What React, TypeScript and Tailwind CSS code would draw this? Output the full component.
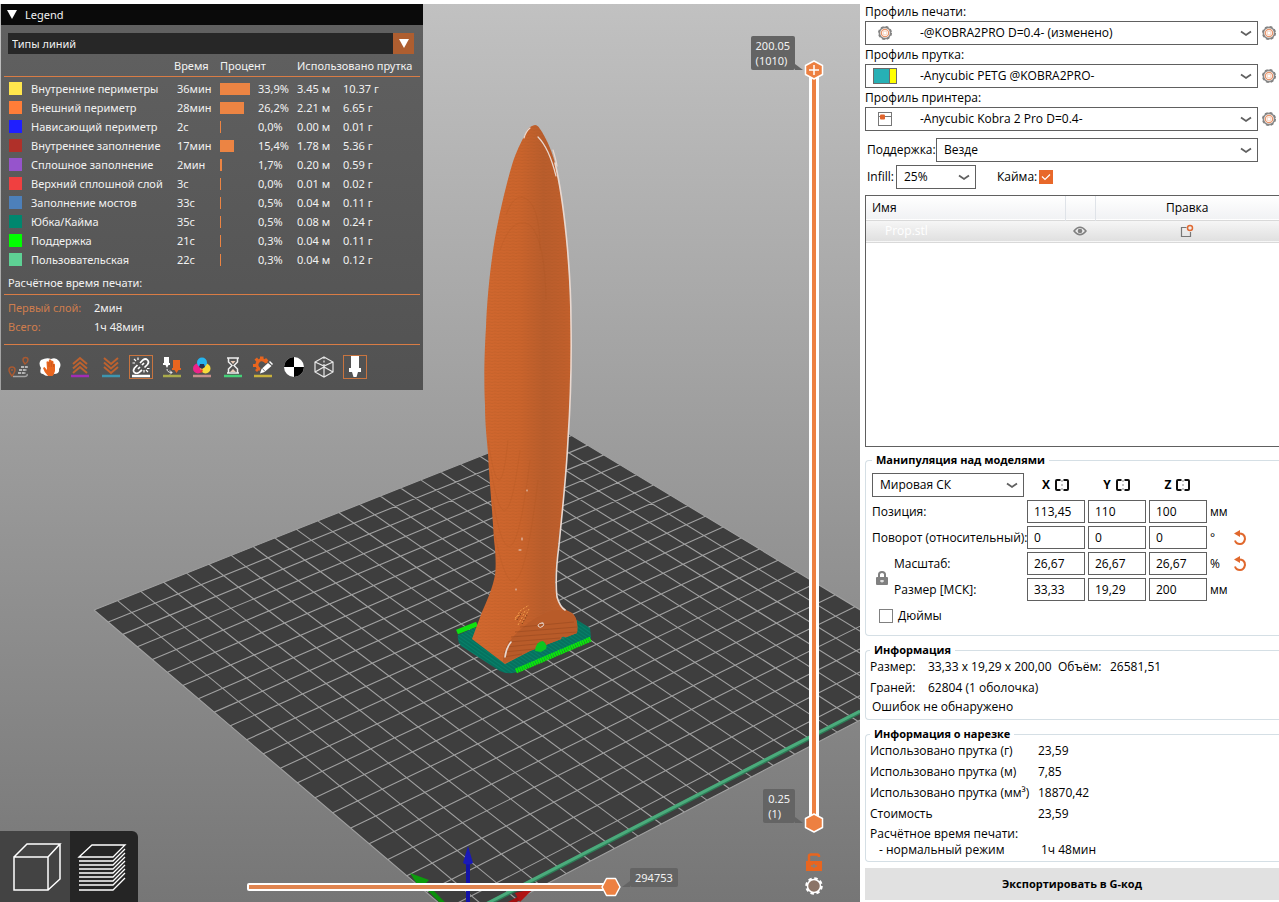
import React, { useState } from 'react';

type Point = [number, number];

interface LineType {
  name: string;
  color: string;
  time: string;
  bar: number;
  percent: string;
  meters: string;
  grams: string;
}

const lineTypes: LineType[] = [
  { name: 'Внутренние периметры', color: '#ffe64d', time: '36мин', bar: 30, percent: '33,9%', meters: '3.45 м', grams: '10.37 г' },
  { name: 'Внешний периметр', color: '#ff7d38', time: '28мин', bar: 24, percent: '26,2%', meters: '2.21 м', grams: '6.65 г' },
  { name: 'Нависающий периметр', color: '#1f1fff', time: '2с', bar: 1, percent: '0,0%', meters: '0.00 м', grams: '0.01 г' },
  { name: 'Внутреннее заполнение', color: '#b03029', time: '17мин', bar: 14, percent: '15,4%', meters: '1.78 м', grams: '5.36 г' },
  { name: 'Сплошное заполнение', color: '#9654cc', time: '2мин', bar: 2, percent: '1,7%', meters: '0.20 м', grams: '0.59 г' },
  { name: 'Верхний сплошной слой', color: '#f04040', time: '3с', bar: 1, percent: '0,0%', meters: '0.01 м', grams: '0.02 г' },
  { name: 'Заполнение мостов', color: '#4d80ba', time: '33с', bar: 1, percent: '0,5%', meters: '0.04 м', grams: '0.11 г' },
  { name: 'Юбка/Кайма', color: '#00876e', time: '35с', bar: 1, percent: '0,5%', meters: '0.08 м', grams: '0.24 г' },
  { name: 'Поддержка', color: '#00ff00', time: '21с', bar: 1, percent: '0,3%', meters: '0.04 м', grams: '0.11 г' },
  { name: 'Пользовательская', color: '#5ed194', time: '22с', bar: 1, percent: '0,3%', meters: '0.04 м', grams: '0.12 г' },
];

// Bed corners: front, right, back, left
const bed: Point[] = [[466, 926], [958, 669], [556, 426], [94, 610]];
const CELLS = 22;

// Projects a bed position (0..1, 0..1) to the scene
const project = (u: number, v: number): Point => {
  const [[x0, y0], [x1, y1], [x2, y2], [x3, y3]] = bed;
  const dx1 = x1 - x2, dx2 = x3 - x2, dx3 = x0 - x1 + x2 - x3;
  const dy1 = y1 - y2, dy2 = y3 - y2, dy3 = y0 - y1 + y2 - y3;
  const den = dx1 * dy2 - dx2 * dy1;
  const g = (dx3 * dy2 - dx2 * dy3) / den;
  const h = (dx1 * dy3 - dx3 * dy1) / den;
  const w = g * u + h * v + 1;
  return [
    ((x1 - x0 + g * x1) * u + (x3 - x0 + h * x3) * v + x0) / w,
    ((y1 - y0 + g * y1) * u + (y3 - y0 + h * y3) * v + y0) / w,
  ];
};

const segment = (a: Point, b: Point) => `M${a.join(' ')}L${b.join(' ')}`;

const gridPath = Array.from({ length: CELLS + 1 }, (_, i) => {
  const t = i / CELLS;
  return segment(project(t, 0), project(t, 1)) + segment(project(0, t), project(1, t));
}).join('');

const bladePath =
  'M535 125C530 126 526 130 525 135C521 142 516 152 512 165C506 185 499 215 495 238C490 268 487 300 486 327C484 360 484 385 485 405C485 425 487 440 488 453C489 475 493 520 494 540C496 555 496 568 495 575C493 587 487 601 482 612L472 639L505 664L530 651L577 633C578 625 577 617 572 613C566 610 560 607 557 598C555 590 555 578 556 570C558 545 560 530 562 513C564 495 567 455 568 440C571 400 572 350 571 323C570 290 569 270 566 235C564 210 560 188 555 163C551 148 545 136 540 129C538 126 537 125 535 125Z';

const Scene = () => (
  <svg className="absolute inset-0 w-full h-full" viewBox="0 4 860 898" preserveAspectRatio="xMidYMid slice" aria-hidden="true">
    <defs>
      <linearGradient id="sky" x1="0" y1="0" x2="0" y2="1">
        <stop offset="0" stopColor="#c1c1c1" />
        <stop offset="1" stopColor="#767676" />
      </linearGradient>
      <linearGradient id="plastic" x1="0" y1="0" x2="1" y2="0">
        <stop offset="0" stopColor="#d2682f" />
        <stop offset="0.45" stopColor="#cb642c" />
        <stop offset="0.68" stopColor="#b95d2c" />
        <stop offset="0.88" stopColor="#c05f2c" />
        <stop offset="1" stopColor="#c8622c" />
      </linearGradient>
      <pattern id="layers" width="6" height="3" patternUnits="userSpaceOnUse">
        <path d="M0 1.5L3 .8L6 1.5" fill="none" stroke="#9e4c1e" strokeOpacity=".18" />
      </pattern>
      <pattern id="brim" width="3" height="3" patternUnits="userSpaceOnUse" patternTransform="rotate(35)">
        <rect width="3" height="3" fill="#078069" />
        <path d="M0 1H3" stroke="#056353" strokeWidth="1" />
      </pattern>
      <clipPath id="bladeClip"><path d={bladePath} /></clipPath>
    </defs>
    <rect y="4" width="860" height="898" fill="url(#sky)" />

    {/* Print bed */}
    <polygon points={bed.map((p) => p.join(',')).join(' ')} fill="#3e3e3e" />
    <path d={gridPath} fill="none" stroke="#a0a0a0" strokeWidth="1.1" />
    <path d="M480 908L860 712" stroke="#2d7d57" strokeWidth="4" />
    <path d="M480 907L860 711" stroke="#4bab7c" strokeWidth="3" />

    {/* Axes */}
    <path d="M466 926L426 886" stroke="#0a8f0a" strokeWidth="4" />
    <path d="M410 873L429 880L420 889Z" fill="#0c9c0c" />
    <path d="M466 926L520 898" stroke="#a01010" strokeWidth="4" />
    <path d="M533 889L515 893L520 902Z" fill="#b01515" />
    <path d="M468 862V902" stroke="#1313a6" strokeWidth="4" />
    <path d="M468 846L473 863Q468 866 463 863Z" fill="#1a1ab8" />

    {/* Brim and supports */}
    <path d="M457 632L477 624" stroke="#0fe00f" strokeWidth="5" />
    <path d="M458 635L474 628L577 620L590 628L591 638L517 672Q508 675 500 671L461 646Q457 641 458 635Z" fill="url(#brim)" />
    <path d="M516 671L591 639" stroke="#0be60b" strokeWidth="5" strokeDasharray="2 .4" />

    {/* Model */}
    <path d={bladePath} fill="url(#plastic)" />
    <path d={bladePath} fill="url(#layers)" />
    <g clipPath="url(#bladeClip)">
      <g fill="none" stroke="#a9531f" strokeOpacity=".18">
        <path d="M488 440Q500 520 508 440M491 470Q506 560 520 450M493 500Q512 610 530 460M495 535Q518 650 538 480" />
        <path d="M506 215Q515 190 528 200Q540 210 540 250M500 250Q512 215 530 225Q545 240 546 300" />
      </g>
      <path d="M503 664Q502 650 512 638Q528 620 548 612Q568 606 578 620V634L530 651Z" fill="#b85b29" />
      <path d="M520 627L574 622M515 632L577 627M511 637L577 632M508 642L560 638M506 647L546 643M504 652L535 649M504 657L522 654" stroke="#9a4a20" strokeOpacity=".6" />
      <path d="M515 620l5-9m-2 14l7-13m-3 11l7-14m-9 2l9-6m-14 13l12-8" stroke="#f09a4a" strokeWidth="1" strokeDasharray="2 1.5" />
      <path d="M517 620l5-8m0 12l5-9" stroke="#7d3c18" strokeDasharray="1.5 1.5" />
    </g>
    <path d="M535 651Q536 641 543 641Q548 645 546 649L541 652Z" fill="#0cc520" />
    <path d="M561 639Q562 635 566 638Z" fill="#078069" />
    <g fill="none" stroke="#e8d8d0" strokeLinecap="round">
      <path d="M555 163C564 200 571 270 571 323C572 380 570 410 568 440C566 480 562 513 559 545C557 560 555 580 557 597Q560 607 565 610" strokeWidth="1.6" />
      <path d="M538 137Q549 148 556 176M553 150Q556 160 557 166M530 128Q526 131 524 138" strokeWidth="1.2" />
      <path d="M505 657Q506 648 511 642" strokeWidth="1.6" />
      <path d="M543 623q-5 0-5 3q2 3 5 0q2-3-1-3" />
      <path d="M522 538v2M519 550h2M527 490v1M516 589v1" strokeWidth="1" />
    </g>
  </svg>
);

const toolClass = 'w-[22px] h-[22px] flex items-center justify-center';

interface ToolProps {
  label: string;
  active?: boolean;
  underline?: string;
  children: React.ReactNode;
}

const Tool = ({ label, active, underline, children }: ToolProps) => (
  <button type="button" aria-label={label} className={`${toolClass} ${active ? 'outline outline-[#c8743f]' : ''}`}>
    <svg width="22" height="22" viewBox="0 0 22 22" fill="none">
      {children}
      {underline && <path d="M2 20H20" stroke={underline} strokeWidth="2.5" />}
    </svg>
  </button>
);

const Tools = () => (
  <div className="flex justify-between w-[358px] mt-[11px]">
    <Tool label="Перемещения">
      <path d="M4 20C1 16 1 15 1 14a3 3 0 0 1 6 0c0 1 0 2-3 6ZM17 8c-2-2.500-2-3-2-4a2.500 2.500 0 0 1 5 0c0 1 0 2-3 4Z" stroke="#a85a32" strokeWidth="1.500" />
      <circle cx="4" cy="14" r="1" fill="#a85a32" />
      <path d="M5 20.500H17Q20 20 19 18" stroke="#a5a5a5" strokeWidth="1.500" />
      <path d="M13 11H20M11 14H19M10 17H18" stroke="#b5b5b5" strokeWidth="2" strokeDasharray="3 .8" />
    </Tool>
    <Tool label="Очистка">
      <path d="M2 4Q8 1 12 3Q17 1 20 5Q23 9 20 13Q21 18 15 18Q8 22 4 18Q0 18 2 12Q-1 7 2 4Z" fill="#fff" />
      <path d="M9 20Q5 16 4 12L5.500 11L8 14L7.500 6Q8 4.500 9.500 6L10 4Q11 2.500 12 4L13 5Q14 4 14.500 6V8Q16 7 16 9V15Q15 19 13.500 20Z" fill="#e8651f" />
      <path d="M10 6V11M12.300 6V11M14.500 8V11" stroke="#b9501a" strokeWidth=".6" />
    </Tool>
    <Tool label="Ретракты" underline="#a22db5">
      <path d="M4 8L11 2L18 8M4 12.500L11 6.500L18 12.500M4 17L11 11L18 17" stroke="#bd622f" strokeWidth="2" />
    </Tool>
    <Tool label="Деретракты" underline="#3e95ae">
      <path d="M4 2L11 8L18 2M4 6.500L11 12.500L18 6.500M4 11L11 17L18 11" stroke="#bd622f" strokeWidth="2" />
    </Tool>
    <Tool label="Швы" active underline="#fff">
      <path d="M10 7l3-3q2.500-2 4.500 0t0 4.500l-3 3M12 14l-3 2.500q-2.500 1.500-4.500 0t0-4.500l3-3M8 13l2-2M12 9l2-2" stroke="#fff" strokeWidth="1.700" />
      <path d="M4 3l2 2M8 1.500v2.500M2.500 7h2.500M16 14l2 2M14 14v2.500M17 12.500h2.500" stroke="#fff" strokeWidth="1.200" />
    </Tool>
    <Tool label="Смена инструмента" underline="#a9ab4b">
      <path d="M3 1H8V7H9V9H7.500L6 12L4.500 9H2V7H3Z" fill="#fff" />
      <path d="M12 4H19V12H20V14H17.500L15.500 17L13.500 14H11V12H12Z" fill="#e8651f" />
      <path d="M6 13Q6 16.500 11 16.500M9 14.500l2 2l-2 2" stroke="#eee" />
    </Tool>
    <Tool label="Смена цвета" underline="#c68f8b">
      <circle cx="7" cy="12.500" r="5" fill="#ed2289" />
      <circle cx="14.500" cy="12.500" r="5" fill="#f6dc3c" />
      <circle cx="11" cy="6.500" r="5" fill="#25b5ef" />
      <path d="M9 8L13 8L14 11L11 13L8 11Z" fill="#243252" />
      <path d="M11 13Q8 15 10 17Q13 15 11 13Z" fill="#e8402a" />
    </Tool>
    <Tool label="Паузы печати" underline="#45d078">
      <path d="M5 2H17M5 17H17M6.500 2V6L10 9.500L6.500 13V17M15.500 2V6L12 9.500L15.500 13V17" stroke="#eee" strokeWidth="1.500" />
      <path d="M8.500 5H13.500L11 8ZM8 16L11 13L14 16Z" fill="#e8c9b5" />
    </Tool>
    <Tool label="Пользовательский G-код" underline="#c9b23c">
      <path d="M8 13.500A5 5 0 1 1 14.500 7" stroke="#e8651f" strokeWidth="3" />
      <path d="M8 .5H11.500V3H8ZM2.500 3.500L5 1.500L7 4L4.500 6ZM14 2L16.500 4.500L14.500 6.500L12 4ZM1 8H4V11H1ZM3 14L5.500 12L7 14L5 16Z" fill="#e8651f" />
      <path d="M8 17.500L9.500 13L16 7L19.500 10L12.500 16Z" fill="#fff" />
      <path d="M17 6L18 5L21 8L20 9Z" fill="#fff" />
      <path d="M10.500 12.500L13 15.500" stroke="#555" strokeWidth=".8" />
    </Tool>
    <Tool label="Центр масс">
      <circle cx="11" cy="11" r="10" fill="#fff" />
      <path d="M11 11V1A10 10 0 0 0 1 11ZM11 11H21A10 10 0 0 1 11 21Z" fill="#000" />
    </Tool>
    <Tool label="Оболочки">
      <path d="M11 1L20 6V16L11 21L2 16V6ZM2 6L11 10L20 6M11 10V21M2 16L11 11L20 16" stroke="#e8e8e8" strokeWidth="1.200" />
      <path d="M11 1V10" stroke="#e8e8e8" strokeWidth="1.200" strokeDasharray="2 1.500" />
    </Tool>
    <Tool label="Маркер инструмента" active>
      <path d="M7 0H15V12H17V16H14L12.500 21H9.500L8 16H5V12H7Z" fill="#fff" />
    </Tool>
  </div>
);

const LegendPanel = () => {
  const [open, setOpen] = useState(true);

  return (
    <section className="absolute top-0 left-[1px] w-[422px] bg-linear-to-b from-[#616161] to-[#525252] text-[#f2f2f2] text-[11px] leading-[19px] font-['Noto_Sans',sans-serif]">
      <button type="button" onClick={() => setOpen(!open)} className="w-full h-[21px] bg-[#0a0a0a] flex items-center gap-2 px-1.5">
        <svg width="10" height="9" viewBox="0 0 10 9"><path d="M0 0H10L5 9Z" fill="#fff" /></svg>
        Legend
      </button>
      {open && (
        <div className="px-[3px] pt-2 pb-3">
          <div className="relative mx-1 mr-[6px]">
            <select aria-label="Тип отображения" className="block appearance-none w-full h-[21px] bg-[#272727] pl-1 outline-none">
              <option>Типы линий</option>
            </select>
            <span className="absolute right-0 top-0 w-[21px] h-[21px] bg-[#ae5e30] flex items-center justify-center pointer-events-none">
              <svg width="10" height="9" viewBox="0 0 10 9"><path d="M0 0H10L5 9Z" fill="#fff" /></svg>
            </span>
          </div>

          <table className="w-full table-fixed border-separate border-spacing-0 text-left mt-px">
            <colgroup>
              <col className="w-[27px]" />
              <col className="w-[143px]" />
              <col className="w-[46px]" />
              <col className="w-[38px]" />
              <col className="w-[39px]" />
              <col className="w-[46px]" />
              <col />
            </colgroup>
            <thead>
              <tr className="h-[22px]">
                <th colSpan={2} aria-label="Тип" className="p-0 border-b border-[#d97c45]" />
                <th className="font-normal p-0 border-b border-[#d97c45]">Время</th>
                <th colSpan={2} className="font-normal p-0 border-b border-[#d97c45]">Процент</th>
                <th colSpan={2} className="font-normal p-0 border-b border-[#d97c45] whitespace-nowrap">Использовано прутка</th>
              </tr>
              <tr className="h-0.5" />
            </thead>
            <tbody>
              {lineTypes.map((line) => (
                <tr key={line.name} className="h-[19px] whitespace-nowrap">
                  <td className="p-0 pl-[5px]">
                    <div className="w-[13px] h-[13px]" style={{ backgroundColor: line.color }} />
                  </td>
                  <td className="p-0">{line.name}</td>
                  <td className="p-0 pl-[3px]">{line.time}</td>
                  <td className="p-0">
                    <div className="h-3 bg-[#ec8443]" style={{ width: line.bar }} />
                  </td>
                  <td className="p-0">{line.percent}</td>
                  <td className="p-0">{line.meters}</td>
                  <td className="p-0">{line.grams}</td>
                </tr>
              ))}
            </tbody>
          </table>

          <p className="px-1 mt-1 pb-0.5 border-b border-[#d97c45]">Расчётное время печати:</p>
          <dl className="grid grid-cols-[86px_1fr] px-1 pt-[3px] pb-2 border-b border-[#d97c45]">
            <dt className="text-[#cf7d4d]">Первый слой:</dt>
            <dd>2мин</dd>
            <dt className="text-[#cf7d4d]">Всего:</dt>
            <dd>1ч 48мин</dd>
          </dl>
          <div className="pl-1"><Tools /></div>
        </div>
      )}
    </section>
  );
};

const Hexagon = ({ plus, flat }: { plus?: boolean; flat?: boolean }) => (
  <svg width="20" height="20" viewBox="0 0 20 20" className="shrink-0 relative">
    <path
      d={flat ? 'M5.500 1.500H14.500L19 10L14.500 18.500H5.500L1 10Z' : 'M10 1L18.500 5.500V14.500L10 19L1.500 14.500V5.500Z'}
      fill="#ed8041"
      stroke="#fff"
      strokeWidth="1.500"
      strokeLinejoin="round"
    />
    {plus && <path d="M10 5V15M5 10H15" stroke="#fff" strokeWidth="1.500" />}
  </svg>
);

const SliderTip = ({ children }: { children: React.ReactNode }) => (
  <div className="absolute right-full bottom-[10px] mr-[9px] bg-[#646464] rounded-xs text-[#f2f2f2] text-[11px] leading-[15px] px-[5px] py-0.5">
    {children}
    <svg className="absolute left-full bottom-0" width="8" height="6" viewBox="0 0 8 6"><path d="M0 0L8 6H0Z" fill="#646464" /></svg>
  </div>
);

const LayerSlider = () => (
  <div className="absolute right-[36px] top-[56px] bottom-[69px] w-5 flex flex-col items-center font-['Noto_Sans',sans-serif]">
    <div className="relative z-10">
      <SliderTip>200.05<br />(1010)</SliderTip>
      <Hexagon plus />
    </div>
    <div className="flex-1 w-[10px] -my-1 bg-white px-[3px]">
      <div className="h-full bg-[#ed8041]" />
    </div>
    <div className="relative z-10">
      <SliderTip>0.25<br />(1)</SliderTip>
      <Hexagon />
    </div>
    <input type="range" aria-label="Слой" min={1} max={1010} defaultValue={1010} className="absolute inset-0 z-20 w-full h-full opacity-0 [writing-mode:vertical-lr] [direction:rtl]" />
  </div>
);

const MoveSlider = () => (
  <div className="absolute left-[247px] right-[239px] bottom-[5px] h-5 flex items-center font-['Noto_Sans',sans-serif]">
    <div className="flex-1 h-2 bg-white rounded-xs p-0.5 pr-0">
      <div className="h-full bg-[#e0844f]" />
    </div>
    <div className="-ml-1"><Hexagon flat /></div>
    <div className="absolute left-full bottom-[10px] ml-[9px] bg-[#646464] rounded-xs text-[#f2f2f2] text-[11px] leading-[19px] px-[5px]">
      294753
      <svg className="absolute right-full bottom-0" width="8" height="6" viewBox="0 0 8 6"><path d="M8 0L0 6H8Z" fill="#646464" /></svg>
    </div>
    <input type="range" aria-label="Перемещение" max={294753} defaultValue={294753} className="absolute inset-0 w-full h-full opacity-0" />
  </div>
);

const ViewSwitch = () => (
  <div className="absolute left-0 bottom-0 h-[71px] flex rounded-tr-md overflow-hidden">
    <button type="button" aria-label="3D редактор" className="w-[70px] bg-[#434343] pl-1 flex items-center justify-center">
      <svg width="50" height="50" viewBox="0 0 50 50" fill="none" stroke="#fff" strokeWidth="1.500">
        <path d="M2 15H36V48H2ZM2 15L15 2H48L36 15M48 2V37L36 48" />
      </svg>
    </button>
    <button type="button" aria-label="Предпросмотр" className="w-[68px] bg-[#252525] pr-1 flex items-center justify-center">
      <svg width="50" height="50" viewBox="0 0 50 50" fill="none" stroke="#fff" strokeWidth="1.300">
        <path d="M2 15L15 3H48L36 15Z" />
        {[19, 23, 27, 31, 35, 39, 43, 48].map((y) => (
          <path key={y} d={`M2 ${y}H36L48 ${y - 12}`} />
        ))}
      </svg>
    </button>
  </div>
);

const GearIcon = () => (
  <svg width="14" height="14" viewBox="0 0 14 14" fill="none" className="shrink-0">
    <circle cx="7" cy="7" r="5.600" stroke="#8a8a8a" strokeWidth="1.600" />
    <circle cx="7" cy="7" r="6.300" stroke="#808080" strokeWidth="1.400" strokeDasharray="2.800 2.150" />
    <circle cx="7" cy="7" r="3.700" stroke="#e8946a" strokeWidth="1.200" />
    <circle cx="7" cy="7" r="2" stroke="#f2c4a9" strokeWidth=".8" />
  </svg>
);

const PrinterIcon = () => (
  <svg width="14" height="14" viewBox="0 0 14 14" fill="none">
    <rect x=".5" y=".5" width="13" height="13" stroke="#777" />
    <path d="M0 4.500H14" stroke="#777" />
    <rect x="2" y="2.500" width="5" height="5" rx="1" fill="#e0632b" />
  </svg>
);

const FilamentSwatch = () => (
  <span className="flex w-6 h-4 border border-[#6b6b6b]">
    <span className="flex-1 bg-[#27b0b5]" />
    <span className="w-[7px] bg-[#ffff00] border-l border-[#6b6b6b]" />
  </span>
);

interface DropdownProps {
  id: string;
  value: string;
  className?: string;
  indent?: string;
  icon?: React.ReactNode;
}

const Dropdown = ({ id, value, className = '', indent = 'pl-[7px]', icon }: DropdownProps) => (
  <div className={`relative h-6 ${className}`}>
    <select id={id} className={`block appearance-none w-full h-full border border-[#606060] bg-white outline-none ${indent}`}>
      <option>{value}</option>
    </select>
    {icon && <span className="absolute left-0 top-0 w-[39px] h-full flex items-center justify-center pointer-events-none">{icon}</span>}
    <svg className="absolute right-[6px] top-[9px] pointer-events-none" width="12" height="7" viewBox="0 0 12 7" fill="none">
      <path d="M1 1.500L6 5L11 1.500" stroke="#606060" strokeWidth="1.800" />
    </svg>
  </div>
);

const profiles = [
  { id: 'print', label: 'Профиль печати:', value: '-@KOBRA2PRO D=0.4- (изменено)', icon: <GearIcon /> },
  { id: 'filament', label: 'Профиль прутка:', value: '-Anycubic PETG @KOBRA2PRO-', icon: <FilamentSwatch /> },
  { id: 'printer', label: 'Профиль принтера:', value: '-Anycubic Kobra 2 Pro D=0.4-', icon: <PrinterIcon /> },
];

const Profiles = () => (
  <div>
    {profiles.map((p) => (
      <div key={p.id}>
        <label htmlFor={p.id} className="block leading-[19px]">{p.label}</label>
        <div className="flex items-center gap-1">
          <Dropdown id={p.id} value={p.value} icon={p.icon} indent="pl-[54px]" className="flex-1" />
          <button type="button" aria-label={`Изменить: ${p.label}`} className="mr-[3px]"><GearIcon /></button>
        </div>
      </div>
    ))}
    <div className="flex items-center mt-[7px] pl-0.5 pr-[21px]">
      <label htmlFor="support" className="w-[69px]">Поддержка:</label>
      <Dropdown id="support" value="Везде" className="flex-1" />
    </div>
    <div className="flex items-center mt-[3px] pl-0.5">
      <label htmlFor="infill" className="w-[29px]">Infill:</label>
      <Dropdown id="infill" value="25%" className="w-20" />
      <label className="flex items-center gap-[2px] ml-[21px]">
        Кайма:
        <span className="relative w-[14px] h-[14px]">
          <input type="checkbox" defaultChecked className="peer block appearance-none w-[14px] h-[14px] border border-[#808080] checked:border-[#e8682a] checked:bg-[#e8682a]" />
          <svg className="absolute inset-0 hidden peer-checked:block pointer-events-none" width="14" height="14" viewBox="0 0 14 14" fill="none">
            <path d="M3 6.500L6 9.500L11 4.500" stroke="#fff" strokeWidth="1.200" />
          </svg>
        </span>
      </label>
    </div>
  </div>
);

const ObjectList = () => (
  <div className="flex-1 min-h-[120px] mt-[6px] border border-r-0 border-[#606060]">
    <table className="w-full table-fixed">
      <colgroup>
        <col />
        <col className="w-[30px]" />
        <col className="w-[184px]" />
      </colgroup>
      <thead>
        <tr className="h-6 bg-linear-to-b from-white to-[#f1f2f4] border-b border-[#d9d9d9]">
          <th className="font-normal text-left pl-[6px] border-r border-[#dfe3e8]">Имя</th>
          <th aria-label="Видимость" className="border-r border-[#dfe3e8]" />
          <th className="font-normal">Правка</th>
        </tr>
      </thead>
      <tbody>
        <tr className="h-[22px] bg-linear-to-b from-[#f7f7f7] to-[#e0e0e0] border-b border-[#d9d9d9]">
          <td className="pl-[19px] text-white">Prop.stl</td>
          <td>
            <svg className="mx-auto" width="14" height="10" viewBox="0 0 14 10" fill="none">
              <path d="M1 5Q7-2.500 13 5Q7 12.500 1 5Z" stroke="#808080" strokeWidth="1.500" />
              <circle cx="7" cy="5" r="2.300" fill="#808080" />
            </svg>
          </td>
          <td>
            <svg className="mx-auto" width="14" height="14" viewBox="0 0 14 14" fill="none">
              <path d="M6.500 3.500H1.500V12.500H10.500V8" stroke="#777" strokeWidth="1.200" />
              <circle cx="10" cy="4" r="2.500" stroke="#e06a33" strokeWidth="1.500" />
            </svg>
          </td>
        </tr>
      </tbody>
    </table>
  </div>
);

const MirrorIcon = () => (
  <svg width="16" height="14" viewBox="0 0 16 14" fill="none">
    <path d="M6.500 2H3Q2 2 2 3V11Q2 12 3 12H6.500M9.500 2H13Q14 2 14 3V11Q14 12 13 12H9.500" stroke="#111" strokeWidth="2" />
    <path d="M8 2V12" stroke="#888" strokeDasharray="2 2" />
  </svg>
);

const ResetIcon = () => (
  <svg width="14" height="16" viewBox="0 0 14 16" fill="none">
    <path d="M5 3.500Q12 3 12 9Q11 14 7 14Q3 14 2 10.500" stroke="#e0682d" strokeWidth="2" />
    <path d="M1 3.500L7 0V7Z" fill="#e0682d" />
  </svg>
);

const transforms = [
  { label: 'Позиция:', values: ['113,45', '110', '100'], unit: 'мм' },
  { label: 'Поворот (относительный):', values: ['0', '0', '0'], unit: '°', reset: true },
  { label: 'Масштаб:', values: ['26,67', '26,67', '26,67'], unit: '%', reset: true, nested: true },
  { label: 'Размер [МСК]:', values: ['33,33', '19,29', '200'], unit: 'мм', nested: true },
];

const axes = ['X', 'Y', 'Z'];

const groupClass = 'min-w-0 border border-r-0 border-[#d5dfe5] rounded-l-sm';
const groupTitle = 'font-bold text-[11px] leading-4 px-[4px]';

const Manipulation = () => (
  <fieldset className={`${groupClass} mt-[5px] pl-[6px] pb-[11px]`}>
    <legend className={groupTitle}>Манипуляция над моделями</legend>
    <div className="relative mt-[5px] grid grid-cols-[152px_58px_58px_58px_18px_18px] gap-[3px] items-center">
      <Dropdown id="coords" value="Мировая СК" />
      {axes.map((axis) => (
        <span key={axis} className="flex items-center justify-center gap-1 font-bold">
          {axis}
          <button type="button" aria-label={`Отразить по ${axis}`}><MirrorIcon /></button>
        </span>
      ))}
      <span className="col-span-2" />
      {transforms.map((row) => (
        <React.Fragment key={row.label}>
          <span className={`whitespace-nowrap ${row.nested ? 'pl-[22px]' : ''}`}>{row.label}</span>
          {row.values.map((value, i) => (
            <input key={axes[i]} type="text" aria-label={`${row.label} ${axes[i]}`} defaultValue={value} className="w-full h-[23px] border border-[#606060] pl-[6px] outline-none" />
          ))}
          <span>{row.unit}</span>
          {row.reset ? (
            <button type="button" aria-label={`Сбросить ${row.label}`} className="justify-self-center"><ResetIcon /></button>
          ) : (
            <span />
          )}
        </React.Fragment>
      ))}
      <button type="button" aria-label="Сохранять пропорции" className="absolute left-1 bottom-4">
        <svg width="12" height="14" viewBox="0 0 12 14" fill="none">
          <path d="M3 7V3.500Q3 1 6 1Q9 1 9 3.500V7" stroke="#808080" strokeWidth="2" />
          <rect y="6" width="12" height="8" rx="1" fill="#808080" />
          <path d="M4 10H8M6 9V11.500" stroke="#fff" />
        </svg>
      </button>
    </div>
    <label className="flex items-center gap-[5px] pl-[7px] mt-[7px]">
      <input type="checkbox" className="appearance-none w-[14px] h-[14px] border border-[#808080] checked:bg-[#e8682a]" />
      Дюймы
    </label>
  </fieldset>
);

const ObjectInfo = () => (
  <fieldset className={`${groupClass} mt-[6px] pl-1 pb-[3px]`}>
    <legend className={groupTitle}>Информация</legend>
    <dl className="-mt-0.5 grid grid-cols-[58px_130px_52px_1fr] leading-[21px] whitespace-nowrap">
      <dt>Размер:</dt>
      <dd>33,33 x 19,29 x 200,00</dd>
      <dt>Объём:</dt>
      <dd>26581,51</dd>
      <dt>Граней:</dt>
      <dd className="col-span-3">62804 (1 оболочка)</dd>
    </dl>
    <p className="pl-0.5 leading-[18px]">Ошибок не обнаружено</p>
  </fieldset>
);

const SliceInfo = () => (
  <fieldset className={`${groupClass} mt-[6px] pl-1 pb-[5px]`}>
    <legend className={groupTitle}>Информация о нарезке</legend>
    <dl className="-mt-0.5 grid grid-cols-[168px_1fr] leading-[21px] whitespace-nowrap">
      <dt>Использовано прутка (г)</dt>
      <dd>23,59</dd>
      <dt>Использовано прутка (м)</dt>
      <dd>7,85</dd>
      <dt>Использовано прутка (мм³)</dt>
      <dd>18870,42</dd>
      <dt>Стоимость</dt>
      <dd>23,59</dd>
      <dt className="col-span-2 leading-[20px]">Расчётное время печати:</dt>
      <dt className="pl-[9px] leading-[12px]">- нормальный режим</dt>
      <dd className="pl-[3px] leading-[12px]">1ч 48мин</dd>
    </dl>
  </fieldset>
);

const App: React.FC = () => {
  return (
    <div className="flex min-h-screen bg-white text-black">
      <main className="relative flex-1 mt-1 overflow-hidden">
        <Scene />
        <LegendPanel />
        <LayerSlider />
        <MoveSlider />
        <ViewSwitch />
        <div className="absolute right-[36px] bottom-[7px] w-5 flex flex-col items-center gap-[6px]">
          <button type="button" aria-label="Разблокировать">
            <svg width="16" height="18" viewBox="0 0 16 18" fill="none">
              <path d="M3 9V3Q3 1.500 5 1.500H11Q13 1.500 13 4" stroke="#e8651f" strokeWidth="2.500" />
              <path d="M0 8H16V18H0Z" fill="#e8651f" />
              <path d="M5 13H11M8 11V15" stroke="#8a8078" strokeWidth="1.500" />
            </svg>
          </button>
          <button type="button" aria-label="Настройки шкалы">
            <svg width="18" height="18" viewBox="0 0 18 18">
              <circle cx="9" cy="9" r="7.500" fill="none" stroke="#fff" strokeWidth="2.500" strokeDasharray="3.400 2.490" />
              <circle cx="9" cy="9" r="6.500" fill="#8b7467" stroke="#fff" strokeWidth="1.500" />
            </svg>
          </button>
        </div>
      </main>

      <aside className="w-[419px] shrink-0 flex flex-col pl-[5px] pt-[2px] pb-[2px] text-[12px] leading-4 font-['Open_Sans',sans-serif]">
        <Profiles />
        <ObjectList />
        <Manipulation />
        <ObjectInfo />
        <SliceInfo />
        <button type="button" className="mt-[6px] h-8 shrink-0 bg-[#e1e1e1] font-bold text-[11px]">
          Экспортировать в G-код
        </button>
      </aside>
    </div>
  );
};

export default App;
